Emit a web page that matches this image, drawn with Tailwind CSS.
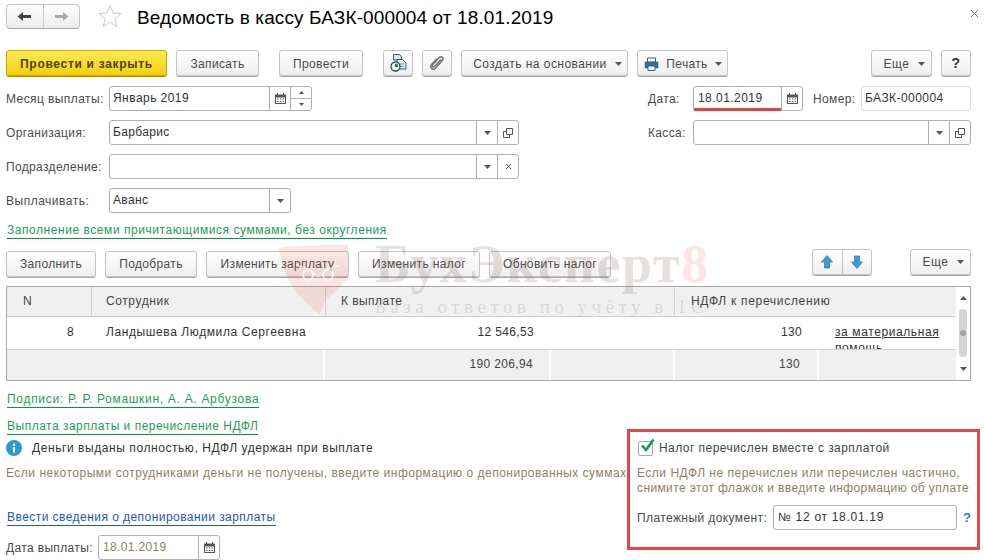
<!DOCTYPE html>
<html lang="ru">

<head>
  <meta charset="UTF-8" />
  <meta name="viewport" content="width=device-width, initial-scale=1.0" />
  <title>Ведомость в кассу</title>
  <script src="https://cdn.jsdelivr.net/npm/@tailwindcss/browser@4"></script>
</head>

<body class="bg-white">
  <div class="relative w-[984px] h-[560px] overflow-hidden pl-[6px] pr-[13px] font-['Liberation_Sans',Arial,sans-serif] text-[12px] tracking-[0.35px] text-[#4a4a4a]">

    <!-- title bar -->
    <div class="flex items-start h-[50px] pt-[4px]">
      <div class="flex w-[74px] h-[25px] rounded-[4px] border border-[#c4c4c4] border-b-[#a8a8a8] bg-gradient-to-b from-white to-[#ececec]">
        <div class="flex-1 flex items-center justify-center border-r border-[#c8c8c8]">
          <svg width="15" height="11" viewBox="0 0 15 11"><path d="M0.5 5.5 6 1v3h8v3H6v3z" fill="#444" /></svg>
        </div>
        <div class="flex-1 flex items-center justify-center">
          <svg width="15" height="11" viewBox="0 0 15 11"><path d="M14.5 5.5 9 1v3H1v3h8v3z" fill="#aaa" /></svg>
        </div>
      </div>
      <svg class="ml-[18px]" width="24" height="24" viewBox="0 0 24 24"><path d="M12 1.5l3 7.5 8 .6-6.100 5.100 2 7.800L12 18.200 5.100 22.500l2-7.800L1 9.600l8-.6z" fill="#fff" stroke="#c9c9c9" /></svg>
      <h1 class="ml-[15px] text-[19px] leading-[28px] tracking-[0.12px] text-black">Ведомость в кассу БАЗК-000004 от 18.01.2019</h1>
      <svg class="ml-auto mt-[5px] mr-[-8px]" width="9" height="9" viewBox="0 0 9 9"><path d="M1 1l7 7M8 1L1 8" stroke="#777" /></svg>
    </div>

    <!-- command bar -->
    <div class="flex items-center h-[26px]">
      <button class="w-[161px] h-[26px] pt-[1px] rounded-[3px] border border-[#c9a800] bg-gradient-to-b from-[#ffe94d] to-[#f5cf00] shadow-[0_1px_0_#a89000] font-bold tracking-[0.7px] text-[#4d4300]">Провести и закрыть</button>
      <button class="ml-[9px] w-[83px] h-[26px] pt-[1px] rounded-[3px] border border-[#c4c4c4] bg-gradient-to-b from-white to-[#efefef] shadow-[0_1px_0_#a8a8a8]">Записать</button>
      <button class="ml-[20px] w-[84px] h-[26px] pt-[1px] rounded-[3px] border border-[#c4c4c4] bg-gradient-to-b from-white to-[#efefef] shadow-[0_1px_0_#a8a8a8]">Провести</button>
      <button class="ml-[20px] w-[30px] h-[26px] flex items-center justify-center rounded-[3px] border border-[#c4c4c4] bg-gradient-to-b from-white to-[#efefef] shadow-[0_1px_0_#a8a8a8]">
        <svg width="17" height="18" viewBox="0 0 17 18"><path d="M3.500.5h6l2 2.500v3h-8z" fill="#dfe7ec" stroke="#3d5560" /><path d="M7 5.500h5.500l3.500 3.500v6H7z" fill="#e8eef1" stroke="#3d5560" /><path d="M9.500 10h4.500M9.500 12.500h4.500" stroke="#6d8a98" /><circle cx="5.500" cy="12.500" r="4.500" fill="#fff" stroke="#2f4650" stroke-width="1.300" /><path d="M5.500 12.500V9.500a3 3 0 0 1 3 3z" fill="#3aa03a" /><path d="M5.500 10v2.500H8" stroke="#2f4650" fill="none" /></svg>
      </button>
      <button class="ml-[9px] w-[30px] h-[26px] flex items-center justify-center rounded-[3px] border border-[#c4c4c4] bg-gradient-to-b from-white to-[#efefef] shadow-[0_1px_0_#a8a8a8]">
        <svg width="16" height="16" viewBox="0 0 16 16"><path d="M12 4.500 5.500 11.500c-1.200 1.300-3-.3-1.800-1.700L10.300 2.600c2-2.200 5 .5 3 2.800L6.300 13.300c-2.300 2.400-6.300-.8-3.800-3.800L8 3.500" fill="none" stroke="#777" stroke-width="1.500" /></svg>
      </button>
      <button class="ml-[9px] w-[167px] h-[26px] pt-[1px] pl-[6px] flex items-center justify-center gap-[8px] rounded-[3px] border border-[#c4c4c4] bg-gradient-to-b from-white to-[#efefef] shadow-[0_1px_0_#a8a8a8] tracking-[0.45px]">
        Создать на основании
        <svg width="7" height="4" viewBox="0 0 7 4"><path d="M0 0h7L3.500 4z" fill="#555" /></svg>
      </button>
      <button class="ml-[9px] w-[91px] h-[26px] pt-[1px] pl-[1px] flex items-center justify-center gap-[7px] rounded-[3px] border border-[#c4c4c4] bg-gradient-to-b from-white to-[#efefef] shadow-[0_1px_0_#a8a8a8]">
        <svg width="15" height="14" viewBox="0 0 15 14"><path d="M3.500 1h8v4h-8z" fill="#fff" stroke="#2f5f85" /><path d="M1 5h13v6H11V9H4v2H1z" fill="#2f6f9f" stroke="#2f5f85" stroke-width=".5" /><path d="M4 9h7v4.500H4z" fill="#fff" stroke="#2f5f85" /></svg>
        Печать
        <svg width="7" height="4" viewBox="0 0 7 4"><path d="M0 0h7L3.500 4z" fill="#555" /></svg>
      </button>
      <button class="ml-auto w-[61px] h-[26px] pt-[1px] pl-[5px] flex items-center justify-center gap-[8px] rounded-[3px] border border-[#c4c4c4] bg-gradient-to-b from-white to-[#efefef] shadow-[0_1px_0_#a8a8a8] tracking-[0.6px]">
        Еще
        <svg width="7" height="4" viewBox="0 0 7 4"><path d="M0 0h7L3.500 4z" fill="#555" /></svg>
      </button>
      <button class="ml-[9px] w-[30px] h-[26px] rounded-[3px] border border-[#c4c4c4] bg-gradient-to-b from-white to-[#efefef] shadow-[0_1px_0_#a8a8a8] font-bold text-[14px] text-[#333]">?</button>
    </div>

    <!-- month / date / number -->
    <div class="flex items-center h-[25px] mt-[10px]">
      <span class="w-[103px] tracking-[0.42px]">Месяц выплаты:</span>
      <div class="flex w-[203px] h-[25px] rounded-[3px] border border-[#b0b0b0]">
        <span class="flex-1 px-[3px] leading-[23px] text-[#333] tracking-[0.45px]">Январь 2019</span>
        <span class="w-[21px] flex items-center justify-center border-l border-[#b0b0b0]">
          <svg width="11" height="11" viewBox="0 0 11 11"><path d="M0 1.500h11V11H0z" fill="#555" /><path d="M2.500 0v3M8.500 0v3" stroke="#555" /><path d="M1 4.500h9V10H1z" fill="#fff" /><path d="M2 5.500h1.500v1H2zM4.800 5.500h1.500v1H4.800zM7.500 5.500H9v1H7.500zM2 8h1.500v1H2zM4.800 8h1.500v1H4.800zM7.500 8H9v1H7.500z" fill="#555" /></svg>
        </span>
        <span class="w-[21px] flex flex-col border-l border-[#b0b0b0]">
          <span class="flex-1 flex items-center justify-center border-b border-[#b0b0b0]">
            <svg width="5" height="3" viewBox="0 0 5 3"><path d="M0 3h5L2.500 0z" fill="#555" /></svg>
          </span>
          <span class="flex-1 flex items-center justify-center">
            <svg width="5" height="3" viewBox="0 0 5 3"><path d="M0 0h5L2.500 3z" fill="#555" /></svg>
          </span>
        </span>
      </div>
      <span class="ml-auto w-[45px]">Дата:</span>
      <div class="relative flex w-[110px] h-[25px] rounded-[3px] border border-[#b0b0b0]">
        <span class="flex-1 px-[4px] leading-[23px] text-[#333] tracking-[0.45px]">18.01.2019</span>
        <span class="w-[21px] flex items-center justify-center border-l border-[#b0b0b0]">
          <svg width="11" height="11" viewBox="0 0 11 11"><path d="M0 1.500h11V11H0z" fill="#555" /><path d="M2.500 0v3M8.500 0v3" stroke="#555" /><path d="M1 4.500h9V10H1z" fill="#fff" /><path d="M2 5.500h1.500v1H2zM4.800 5.500h1.500v1H4.800zM7.500 5.500H9v1H7.500zM2 8h1.500v1H2zM4.800 8h1.500v1H4.800zM7.500 8H9v1H7.500z" fill="#555" /></svg>
        </span>
        <span class="absolute left-0 bottom-[-1px] w-[87px] h-[3px] bg-[#e04444]"></span>
      </div>
      <span class="ml-[10px] w-[48px]">Номер:</span>
      <div class="w-[110px] h-[25px] rounded-[3px] border border-[#dcdcdc] px-[3px] leading-[23px] text-[#333] tracking-[0.45px]">БАЗК-000004</div>
    </div>

    <!-- organisation / cash desk -->
    <div class="flex items-center h-[25px] mt-[9px]">
      <span class="w-[103px]">Организация:</span>
      <div class="flex w-[410px] h-[25px] rounded-[3px] border border-[#b0b0b0]">
        <span class="flex-1 px-[3px] leading-[23px] text-[#333]">Барбарис</span>
        <span class="w-[21px] flex items-center justify-center border-l border-[#b0b0b0]">
          <svg width="7" height="4" viewBox="0 0 7 4"><path d="M0 0h7L3.500 4z" fill="#555" /></svg>
        </span>
        <span class="w-[21px] flex items-center justify-center border-l border-[#b0b0b0]">
          <svg width="10" height="10" viewBox="0 0 10 10"><path d="M3.500.5h6v6h-6z" fill="none" stroke="#555" /><path d="M3.500 3.500h-3v6h6v-3" fill="none" stroke="#555" /></svg>
        </span>
      </div>
      <span class="ml-auto w-[45px]">Касса:</span>
      <div class="flex w-[278px] h-[25px] rounded-[3px] border border-[#b0b0b0]">
        <span class="flex-1"></span>
        <span class="w-[21px] flex items-center justify-center border-l border-[#b0b0b0]">
          <svg width="7" height="4" viewBox="0 0 7 4"><path d="M0 0h7L3.500 4z" fill="#555" /></svg>
        </span>
        <span class="w-[21px] flex items-center justify-center border-l border-[#b0b0b0]">
          <svg width="10" height="10" viewBox="0 0 10 10"><path d="M3.500.5h6v6h-6z" fill="none" stroke="#555" /><path d="M3.500 3.500h-3v6h6v-3" fill="none" stroke="#555" /></svg>
        </span>
      </div>
    </div>

    <!-- department -->
    <div class="flex items-center h-[25px] mt-[9px]">
      <span class="w-[103px]">Подразделение:</span>
      <div class="flex w-[410px] h-[25px] rounded-[3px] border border-[#b0b0b0]">
        <span class="flex-1"></span>
        <span class="w-[21px] flex items-center justify-center border-l border-[#b0b0b0]">
          <svg width="7" height="4" viewBox="0 0 7 4"><path d="M0 0h7L3.500 4z" fill="#555" /></svg>
        </span>
        <span class="w-[21px] flex items-center justify-center border-l border-[#b0b0b0]">
          <svg width="7" height="7" viewBox="0 0 7 7"><path d="M1 1l5 5M6 1L1 6" stroke="#555" /></svg>
        </span>
      </div>
    </div>

    <!-- payout kind -->
    <div class="flex items-center h-[25px] mt-[9px]">
      <span class="w-[103px] tracking-[0.5px]">Выплачивать:</span>
      <div class="flex w-[182px] h-[25px] rounded-[3px] border border-[#b0b0b0]">
        <span class="flex-1 px-[3px] leading-[23px] text-[#333]">Аванс</span>
        <span class="w-[21px] flex items-center justify-center border-l border-[#b0b0b0]">
          <svg width="7" height="4" viewBox="0 0 7 4"><path d="M0 0h7L3.500 4z" fill="#555" /></svg>
        </span>
      </div>
    </div>

    <!-- fill mode link -->
    <div class="h-[18px] mt-[9px] ml-[1px] leading-[16px]">
      <a class="inline-block text-[#1f9d55] border-b border-[#009646] tracking-[0.55px]">Заполнение всеми причитающимися суммами, без округления</a>
    </div>

    <!-- table buttons -->
    <div class="flex items-start h-[26px] mt-[11px]">
      <button class="w-[90px] h-[26px] rounded-[3px] border border-[#c4c4c4] bg-gradient-to-b from-white to-[#efefef] shadow-[0_1px_0_#a8a8a8]">Заполнить</button>
      <button class="ml-[9px] w-[92px] h-[26px] rounded-[3px] border border-[#c4c4c4] bg-gradient-to-b from-white to-[#efefef] shadow-[0_1px_0_#a8a8a8]">Подобрать</button>
      <button class="ml-[9px] w-[143px] h-[26px] rounded-[3px] border border-[#c4c4c4] bg-gradient-to-b from-white to-[#efefef] shadow-[0_1px_0_#a8a8a8]">Изменить зарплату</button>
      <button class="ml-[9px] w-[122px] h-[26px] rounded-[3px] border border-[#c4c4c4] bg-gradient-to-b from-white to-[#efefef] shadow-[0_1px_0_#a8a8a8]">Изменить налог</button>
      <button class="ml-[9px] w-[122px] h-[26px] rounded-[3px] border border-[#c4c4c4] bg-gradient-to-b from-white to-[#efefef] shadow-[0_1px_0_#a8a8a8]">Обновить налог</button>
      <div class="ml-auto mt-[-2px] flex w-[60px] h-[26px] rounded-[3px] border border-[#c4c4c4] bg-gradient-to-b from-white to-[#efefef] shadow-[0_1px_0_#a8a8a8]">
        <span class="flex-1 flex items-center justify-center border-r border-[#c4c4c4]">
          <svg width="12" height="14" viewBox="0 0 12 14"><path d="M6 .5 11.500 7H8.500v6h-5V7H.5z" fill="#3d9ad6" stroke="#2a7ab0" stroke-width=".7" /></svg>
        </span>
        <span class="flex-1 flex items-center justify-center">
          <svg width="12" height="14" viewBox="0 0 12 14"><path d="M6 13.500 11.500 7H8.500V1h-5v6H.5z" fill="#3d9ad6" stroke="#2a7ab0" stroke-width=".7" /></svg>
        </span>
      </div>
      <button class="ml-[38px] mt-[-2px] w-[61px] h-[26px] pl-[5px] flex items-center justify-center gap-[8px] rounded-[3px] border border-[#c4c4c4] bg-gradient-to-b from-white to-[#efefef] shadow-[0_1px_0_#a8a8a8] tracking-[0.6px]">
        Еще
        <svg width="7" height="4" viewBox="0 0 7 4"><path d="M0 0h7L3.500 4z" fill="#555" /></svg>
      </button>
    </div>

    <!-- employees table -->
    <div class="relative mt-[9px] w-[965px] h-[95px] border border-[#a8a8a8] overflow-hidden text-[#444]">
      <div class="flex h-[30px] w-[949px] bg-[#f0f0f0] border-b border-[#d0d0d0]">
        <span class="w-[85px] pl-[16px] leading-[29px] border-r border-[#d0d0d0]">N</span>
        <span class="w-[234px] pl-[14px] leading-[29px] border-r border-[#d0d0d0] tracking-[0.6px]">Сотрудник</span>
        <span class="w-[349px] pl-[15px] leading-[29px] border-r border-[#d0d0d0] tracking-[0.45px]">К выплате</span>
        <span class="flex-1 pl-[16px] leading-[29px] tracking-[0.7px]">НДФЛ к перечислению</span>
      </div>
      <div class="flex h-[33px] w-[949px] bg-white border-b border-[#d0d0d0] text-[#333]">
        <span class="w-[85px] pr-[18px] leading-[30px] text-right">8</span>
        <span class="w-[234px] pl-[14px] leading-[30px] tracking-[0.6px]">Ландышева Людмила Сергеевна</span>
        <span class="w-[225px] pr-[17px] leading-[30px] text-right">12 546,53</span>
        <span class="w-[124px]"></span>
        <span class="w-[144px] pr-[17px] leading-[30px] text-right">130</span>
        <span class="flex-1 pl-[16px] pt-[7px] leading-[16px] overflow-hidden tracking-[0.6px]"><a class="underline">за материальная помощь</a></span>
      </div>
      <div class="flex h-[30px] w-[949px] bg-[#f0f0f0]">
        <span class="w-[318px] border-r-2 border-white"></span>
        <span class="w-[226px] pr-[16px] leading-[29px] text-right border-r-2 border-white">190 206,94</span>
        <span class="w-[124px] border-r-2 border-white"></span>
        <span class="w-[144px] pr-[17px] leading-[29px] text-right border-r-2 border-white">130</span>
        <span class="flex-1"></span>
      </div>
      <!-- scrollbar -->
      <div class="absolute right-0 top-0 bottom-0 w-[14px] flex flex-col items-center justify-between py-[9px] bg-white">
        <svg width="7" height="4" viewBox="0 0 7 4"><path d="M0 4h7L3.500 0z" fill="#555" /></svg>
        <span class="flex items-center justify-center w-[8px] h-[48px] rounded-[4px] bg-[#d4d4d4] mb-[1px]"><span class="w-[6px] h-[6px] rounded-full bg-[#a0a0a0]"></span></span>
        <svg width="7" height="4" viewBox="0 0 7 4"><path d="M0 0h7L3.500 4z" fill="#555" /></svg>
      </div>
    </div>

    <!-- links -->
    <div class="h-[18px] mt-[10px] ml-[1px] leading-[16px]">
      <a class="inline-block text-[#1f9d55] border-b border-[#009646] tracking-[0.7px]">Подписи: Р. Р. Ромашкин, А. А. Арбузова</a>
    </div>
    <div class="h-[18px] mt-[9px] ml-[1px] leading-[16px]">
      <a class="inline-block text-[#1f9d55] border-b border-[#009646] tracking-[0.5px]">Выплата зарплаты и перечисление НДФЛ</a>
    </div>

    <div class="flex items-center h-[18px] mt-[3px]">
      <svg width="16" height="16" viewBox="0 0 16 16"><circle cx="8" cy="8" r="8" fill="#2e9bd0" /><path d="M7 7h2v5.500H7z" fill="#fff" /><circle cx="8" cy="4.700" r="1.200" fill="#fff" /></svg>
      <span class="ml-[10px] text-[#333] tracking-[0.57px]">Деньги выданы полностью, НДФЛ удержан при выплате</span>
    </div>
    <p class="mt-[8px] leading-[16px] whitespace-nowrap text-[#8f7f66] tracking-[0.5px]">Если некоторыми сотрудниками деньги не получены, введите информацию о депонированных суммах</p>

    <div class="h-[18px] mt-[28px] ml-[1px] leading-[16px]">
      <a class="inline-block text-[#2358b8] border-b border-[#2358b8] tracking-[0.45px]">Ввести сведения о депонировании зарплаты</a>
    </div>
    <div class="flex items-center h-[25px] mt-[8px]">
      <span class="w-[92px]">Дата выплаты:</span>
      <div class="flex w-[122px] h-[25px] rounded-[3px] border border-[#b0b0b0]">
        <span class="flex-1 px-[4px] leading-[23px] text-[#8f7f66]">18.01.2019</span>
        <span class="w-[21px] flex items-center justify-center border-l border-[#b0b0b0]">
          <svg width="11" height="11" viewBox="0 0 11 11"><path d="M0 1.500h11V11H0z" fill="#555" /><path d="M2.500 0v3M8.500 0v3" stroke="#555" /><path d="M1 4.500h9V10H1z" fill="#fff" /><path d="M2 5.500h1.500v1H2zM4.800 5.500h1.500v1H4.800zM7.500 5.500H9v1H7.500zM2 8h1.500v1H2zM4.800 8h1.500v1H4.800zM7.500 8H9v1H7.500z" fill="#555" /></svg>
        </span>
      </div>
    </div>

    <!-- watermark, lies over the form -->
    <div class="absolute left-[279px] top-[245px] w-[470px] h-[75px] pointer-events-none">
      <svg class="absolute left-0 top-0" width="70" height="70" viewBox="0 0 70 70"><path d="M0 3C20 0 48 0 69 0v34L46 56 41 69C25 58 4 38 0 3z" fill="#e8503c" fill-opacity=".14" /><circle cx="29" cy="30" r="5" fill="none" stroke="#fff" stroke-width="2" stroke-opacity=".75" /><circle cx="49" cy="30" r="5" fill="none" stroke="#fff" stroke-width="2" stroke-opacity=".75" /><path d="M17 20 29 24 39 32 49 24 61 20" fill="none" stroke="#fff" stroke-width="1.500" stroke-opacity=".6" /></svg>
      <div class="absolute left-[96px] top-[-10px] font-['Liberation_Serif',serif] font-bold text-[54px] leading-[58px] tracking-[1.660px] text-[#806a60]/20 whitespace-nowrap">БухЭксперт<span class="text-[#e8503c]/15">8</span></div>
      <div class="absolute left-[96px] top-[51px] font-['Liberation_Serif',serif] text-[19px] leading-[22px] tracking-[4.500px] text-[#806a60]/20 whitespace-nowrap">База ответов по учёту в 1С</div>
    </div>

    <!-- highlighted block, drawn over the page -->
    <div class="absolute left-[627px] top-[429px] w-[353px] h-[121px] border-[3px] border-[#ea4444] bg-white pl-[7px] pt-[8px]">
      <div class="flex items-center h-[16px]">
        <span class="relative ml-[1px] w-[15px] h-[15px] rounded-[2px] border border-[#a8a8a8] bg-white">
          <svg class="absolute left-[1px] top-[-4px]" width="15" height="15" viewBox="0 0 15 15"><path d="M2 7.500 6 12 13.500 1.500" fill="none" stroke="#109a4c" stroke-width="2.600" /></svg>
        </span>
        <span class="ml-[6px] text-[#444] tracking-[0.45px]">Налог перечислен вместе с зарплатой</span>
      </div>
      <p class="mt-[10px] leading-[15px] text-[#8f7f66] whitespace-nowrap"><span class="block tracking-[0.5px]">Если НДФЛ не перечислен или перечислен частично,</span><span class="block tracking-[0.38px]">снимите этот флажок и введите информацию об уплате</span></p>
      <div class="flex items-center mt-[9px] h-[25px]">
        <span class="w-[136px] tracking-[0.4px]">Платежный документ:</span>
        <div class="w-[184px] h-[25px] rounded-[3px] border border-[#b0b0b0] px-[4px] leading-[23px] text-[#333] tracking-[0.7px]">№ 12 от 18.01.19</div>
        <span class="ml-[6px] text-[13px] font-bold text-[#1a7fc4]">?</span>
      </div>
    </div>
  </div>
</body>

</html>
